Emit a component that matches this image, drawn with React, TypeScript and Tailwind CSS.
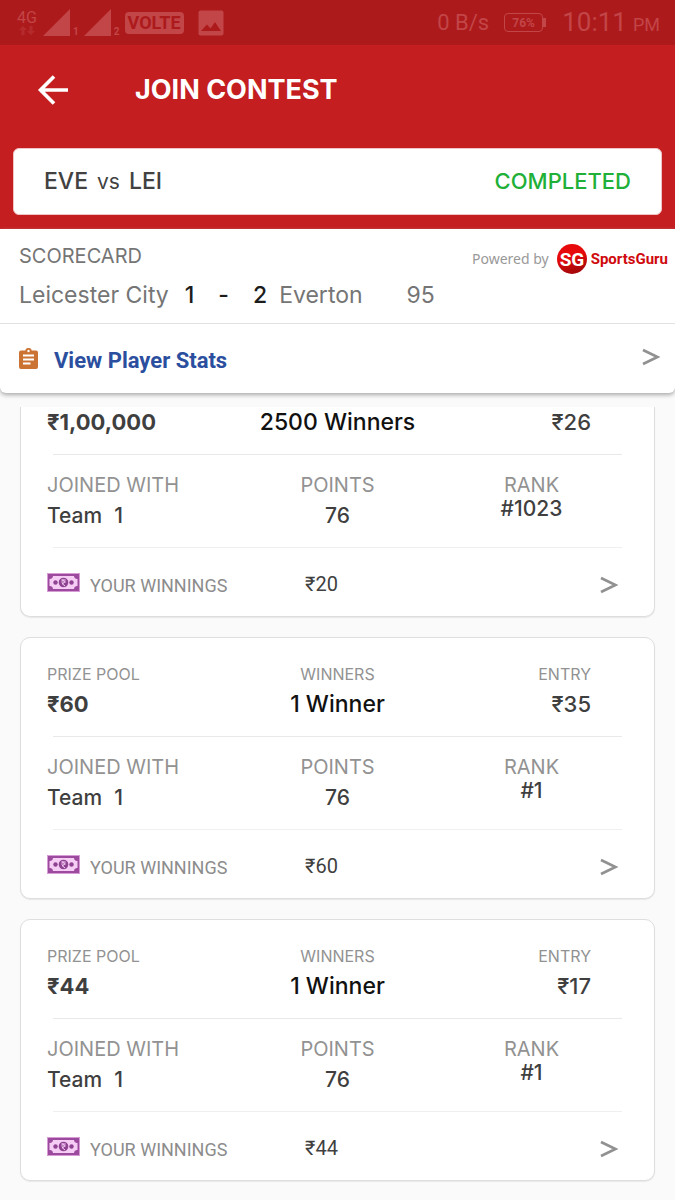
const MATCH = { title: ["EVE", "LEI"], status: "COMPLETED" };

// the first contest is scrolled up under the header, so its labels are out of view
const CONTESTS = [
  { prize: "₹1,00,000", winners: "2500 Winners", entry: "₹26", team: "1", points: 76, rank: "#1023", won: "₹20", scrolled: true },
  { prize: "₹60", winners: "1 Winner", entry: "₹35", team: "1", points: 76, rank: "#1", won: "₹60", scrolled: false },
  { prize: "₹44", winners: "1 Winner", entry: "₹17", team: "1", points: 76, rank: "#1", won: "₹44", scrolled: false },
];

const StatusBar = () => {
  return (
    <div className="flex h-[45px] items-center justify-between bg-[#ad1a1c] pl-4 pr-[15px] font-['Roboto',sans-serif] text-[#c24547]">
      <div className="flex items-center">
        <div className="flex w-[22px] flex-col items-center">
          <span className="text-base leading-4">4G</span>
          <svg width="18" height="9" viewBox="0 0 18 9" fill="#b52a2c">
            <path d="M5 0 9 4H6.500V9H3.500V4H1zM13 9 9 5H11.500V0H14.500V5H17z" />
          </svg>
        </div>
        <SignalIcon sim="1" />
        <SignalIcon sim="2" />
        <span className="ml-[5px] rounded-sm bg-[#c24547] px-[3px] text-lg font-bold leading-[22px] text-[#ad1a1c]">
          VOLTE
        </span>
        <svg className="ml-[14px]" width="26" height="26" viewBox="0 0 26 26">
          <rect x="0.500" y="0.500" width="25" height="25" rx="2" fill="#c24547" />
          <path d="M3 21 9 14.500 12.500 18.500 17 12 23 21z" fill="#ad1a1c" />
        </svg>
      </div>
      <div className="flex items-center">
        <span className="text-[22px] leading-[30px]">0 B/s</span>
        <span className="ml-[15px] flex h-[19px] w-[39px] items-center justify-center rounded-sm border border-current text-xs font-bold">
          76%
        </span>
        <span className="h-[9px] w-[3px] bg-[#c24547]" />
        <span className="ml-4 flex items-baseline gap-[6px] text-[26px] leading-[30px]">
          10:11 <span className="text-lg">PM</span>
        </span>
      </div>
    </div>
  );
};

const SignalIcon = ({ sim }: { sim: string }) => {
  return (
    <span className="ml-[5px] flex items-end">
      <svg width="27" height="27" viewBox="0 0 27 27" fill="#c24547">
        <path d="M27 0V27H0z" />
      </svg>
      <span className="ml-[3px] text-[10px] font-bold leading-[9px]">{sim}</span>
    </span>
  );
};

const ClipboardIcon = () => {
  return (
    <svg width="19" height="21" viewBox="0 0 19 21">
      <path
        d="M2 2.500H6.200A3.400 3.400 0 0 1 12.800 2.500H17A2 2 0 0 1 19 4.500V19A2 2 0 0 1 17 21H2A2 2 0 0 1 0 19V4.500A2 2 0 0 1 2 2.500z"
        fill="#cb7333"
      />
      <circle cx="9.500" cy="3" r="1.200" fill="#fff" />
      <path d="M4 7.500H15M4 11.500H15M4 15.500H11.500" stroke="#fff" strokeWidth="1.800" />
    </svg>
  );
};

const BanknoteIcon = () => {
  return (
    <svg width="33" height="19" viewBox="0 0 33 19" className="shrink-0">
      <rect width="33" height="19" fill="#d79bd6" />
      <rect x="1" y="1" width="31" height="17" fill="#9b4a9d" />
      <path
        d="M6 3H27A3 3 0 0 0 30.500 6V13A3 3 0 0 0 27 16H6A3 3 0 0 0 2.500 13V6A3 3 0 0 0 6 3z"
        fill="#f6cdf5"
      />
      <circle cx="8.500" cy="9.500" r="2.200" fill="#8f4492" />
      <circle cx="24.500" cy="9.500" r="2.200" fill="#8f4492" />
      <circle cx="16.500" cy="9.500" r="4.800" fill="#8f4492" />
      <path d="M14.300 7H18.700M14.300 9H18.700M15 7C18.500 7 18.500 10.500 15 10.500L18 13" fill="none" stroke="#f6cdf5" strokeWidth="1" />
    </svg>
  );
};

const SportsGuruLogo = () => {
  return (
    <a href="#sportsguru" className="flex items-center gap-1 font-['Roboto',sans-serif] text-[#d0090d]">
      <svg width="30" height="30" viewBox="0 0 30 30">
        <defs>
          <linearGradient id="sg" x1="0" y1="0" x2="0.300" y2="1">
            <stop offset="0.500" stopColor="#e60a0d" />
            <stop offset="1" stopColor="#a8080a" />
          </linearGradient>
        </defs>
        <circle cx="15" cy="15" r="15" fill="url(#sg)" />
        <text x="15" y="22" textAnchor="middle" fontSize="19" fontWeight="700" fill="#fff">
          SG
        </text>
      </svg>
      <span className="text-[15px] font-bold leading-5">SportsGuru</span>
    </a>
  );
};

const Chevron = ({ label }: { label: string }) => {
  return (
    <button aria-label={label} className="text-[#919191]">
      <svg width="18" height="18" viewBox="0 0 18 18" fill="none" stroke="currentColor" strokeWidth="2.600">
        <path d="M1 2 15.500 9 1 16" />
      </svg>
    </button>
  );
};

const ContestCard = ({ contest }: { contest: (typeof CONTESTS)[number] }) => {
  const { scrolled } = contest;

  return (
    <article
      className={
        scrolled
          ? "rounded-b-[10px] border border-t-0 border-[#dedede] bg-white text-[#3f3f3f] shadow-[0_1px_1px_#e8e8e8]"
          : "rounded-[10px] border border-[#dedede] bg-white text-[#3f3f3f] shadow-[0_1px_1px_#e8e8e8]"
      }
    >
      <div className={scrolled ? "grid grid-cols-3 pb-[17px]" : "grid grid-cols-3 pb-[17px] pt-[26px]"}>
        <div className="pl-[26px]">
          {!scrolled && <p className="mb-[5px] text-base leading-5 text-[#929292]">PRIZE POOL</p>}
          <p className="text-[22px] font-bold leading-[30px]">{contest.prize}</p>
        </div>
        <div className="text-center">
          {!scrolled && <p className="mb-[5px] text-base leading-5 text-[#929292]">WINNERS</p>}
          <p className="whitespace-nowrap text-[23px] font-medium leading-[30px] text-[#111]">{contest.winners}</p>
        </div>
        <div className="pr-[63px] text-right">
          {!scrolled && <p className="mb-[5px] text-base leading-5 text-[#929292]">ENTRY</p>}
          <p className="text-[22px] font-medium leading-[30px]">{contest.entry}</p>
        </div>
      </div>

      <div className="mx-8 h-px bg-[#e9e9e9]" />

      <div className="grid grid-cols-3 pb-4 pt-5">
        <div className="pl-[26px]">
          <p className="text-xl leading-5 text-[#929292]">JOINED WITH</p>
          <p className="mt-[6px] flex gap-3 text-[21px] font-medium leading-[30px]">
            <span>Team</span>
            <span>{contest.team}</span>
          </p>
        </div>
        <div className="text-center">
          <p className="text-xl leading-5 text-[#929292]">POINTS</p>
          <p className="mt-[6px] text-[21px] font-medium leading-[30px]">{contest.points}</p>
        </div>
        <div className="pr-[34px] text-center">
          <p className="text-xl leading-5 text-[#929292]">RANK</p>
          <p className="text-[21px] font-medium leading-7">{contest.rank}</p>
        </div>
      </div>

      <div className="mx-8 h-px bg-[#efefef]" />

      <div className="grid h-[68px] grid-cols-3 items-center font-['Roboto',sans-serif]">
        <div className="flex items-center gap-[10px] pl-[26px]">
          <BanknoteIcon />
          <span className="whitespace-nowrap pt-2 text-lg leading-6 text-[#8c8c8c]">YOUR WINNINGS</span>
        </div>
        <p className="pr-8 pt-1 text-center text-xl leading-6">{contest.won}</p>
        <div className="flex justify-end pr-9 pt-[6px]">
          <Chevron label="View contest" />
        </div>
      </div>
    </article>
  );
};

const App = () => {
  return (
    <div className="min-h-screen bg-[#fafafa] font-['Inter',sans-serif]">
      <StatusBar />

      <header className="bg-[#c41e21] px-[13px] pb-[14px]">
        <div className="flex h-[103px] items-center pb-[13px] pl-6">
          <button aria-label="Back">
            <svg width="32" height="30" viewBox="0 0 32 30" fill="none" stroke="#fff" strokeWidth="3.600">
              <path d="M31 15H4M17 1.500 3.500 15 17 28.500" />
            </svg>
          </button>
          <h1 className="ml-[66px] text-[27px] font-bold leading-8 text-white">JOIN CONTEST</h1>
        </div>
        <div className="flex h-[67px] items-center justify-between rounded-md border border-[#f0c4c4] bg-white px-[30px]">
          <p className="flex items-baseline gap-[9px] text-[23px] font-medium text-[#414141]">
            <span>{MATCH.title[0]}</span>
            <span className="text-[21px] font-normal">vs</span>
            <span>{MATCH.title[1]}</span>
          </p>
          <p className="text-[22px] font-medium text-[#20b038]">{MATCH.status}</p>
        </div>
      </header>

      <section className="rounded-b-md bg-white shadow-[0_2px_4px_#aaa]">
        <div className="h-[95px] border-b border-[#e2e2e2] pl-[19px] pr-[7px] pt-[15px] text-[#757575]">
          <div className="flex justify-between">
            <h2 className="text-xl leading-6">SCORECARD</h2>
            <div className="flex items-center gap-2">
              <span className="font-['Noto_Sans',sans-serif] text-sm leading-5 text-[#999]">Powered by</span>
              <SportsGuruLogo />
            </div>
          </div>
          <div className="mt-[6px] flex text-[23px] leading-[30px]">
            <span>Leicester City</span>
            <span className="ml-4 font-medium text-[#1c1c1c]">1</span>
            <span className="ml-6 font-medium text-[#1c1c1c]">-</span>
            <span className="ml-6 font-medium text-[#1c1c1c]">2</span>
            <span className="ml-3">Everton</span>
            <span className="ml-11">95</span>
          </div>
        </div>
        <div className="flex h-[69px] items-center justify-between pl-[19px] pr-[15px]">
          <a
            href="#stats"
            className="flex items-center gap-4 font-['Roboto',sans-serif] text-[22px] font-bold leading-7 text-[#2b4f9e]"
          >
            <ClipboardIcon />
            <span className="pt-1">View Player Stats</span>
          </a>
          <div className="flex pb-1">
            <Chevron label="View player stats" />
          </div>
        </div>
      </section>

      <main className="mt-[14px] flex flex-col gap-5 px-5 pb-5">
        {CONTESTS.map((c, i) => (
          <ContestCard key={i} contest={c} />
        ))}
      </main>
    </div>
  );
};

export default App;
